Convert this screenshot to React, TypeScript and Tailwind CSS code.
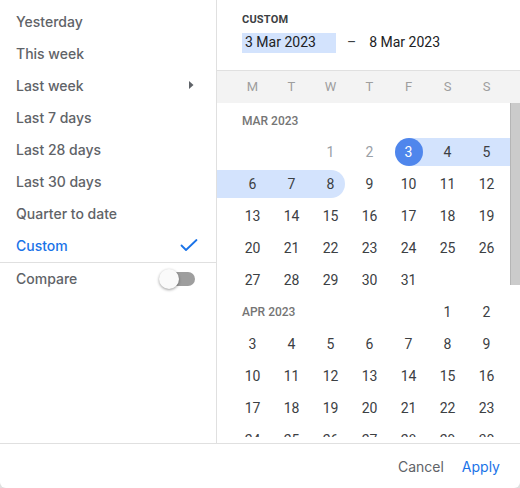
import React from 'react'

const presets = [
  'Yesterday',
  'This week',
  'Last week',
  'Last 7 days',
  'Last 28 days',
  'Last 30 days',
  'Quarter to date',
  'Custom',
]

const weekdays = ['M', 'T', 'W', 'T', 'F', 'S', 'S']

type Month = { label: string; key: number; offset: number; days: number; inlineLabel: boolean }

const months: Month[] = [
  { label: 'MAR 2023', key: 3, offset: 2, days: 31, inlineLabel: false },
  { label: 'APR 2023', key: 4, offset: 5, days: 30, inlineLabel: true },
]

const range = { month: 3, start: 3, end: 8 }

function buildWeeks(m: Month) {
  const cells: (number | null)[] = []
  for (let i = 0; i < m.offset; i++) cells.push(null)
  for (let d = 1; d <= m.days; d++) cells.push(d)
  while (cells.length % 7) cells.push(null)
  const weeks: (number | null)[][] = []
  for (let i = 0; i < cells.length; i += 7) weeks.push(cells.slice(i, i + 7))
  return weeks
}

function inRange(month: number, d: number | null) {
  return d !== null && month === range.month && d >= range.start && d <= range.end
}

function DayCell({ month, day }: { month: number; day: number | null }) {
  if (day === null) return <div className="h-8 w-[39px]" />
  const on = inRange(month, day)
  const isStart = on && day === range.start
  const isEnd = on && day === range.end
  const muted = month === 3 && day < 3

  return (
    <div className="relative flex h-8 w-[39px] items-center justify-center">
      {on && !isStart && !isEnd && <div className="absolute inset-x-0 inset-y-[2px] bg-[#d3e3fd]" />}
      {isStart && <div className="absolute left-1/2 right-0 inset-y-[2px] bg-[#d3e3fd]" />}
      {isEnd && <div className="absolute left-0 right-[5px] inset-y-[2px] rounded-r-full bg-[#d3e3fd]" />}
      {isStart ? (
        <span className="relative flex h-7 w-7 items-center justify-center rounded-full bg-[#4f86ec] text-white">{day}</span>
      ) : (
        <span className={`relative ${muted ? 'text-[#9aa0a6]' : 'text-[#3c4043]'}`}>{day}</span>
      )}
    </div>
  )
}

function MonthBlock({ m }: { m: Month }) {
  const weeks = buildWeeks(m)
  return (
    <div>
      {!m.inlineLabel && (
        <div className="flex h-8 items-center pl-[25px] pt-[2px] text-[12px] font-medium text-[#757575]">{m.label}</div>
      )}
      {weeks.map((w, i) => {
        const leftBand = inRange(m.key, w[0]) && w[0] !== range.start
        const last = w[6]
        const rightBand = inRange(m.key, last) && last !== range.end
        return (
          <div key={i} className="relative flex h-8 items-center">
            <div className={`h-7 w-4 ${leftBand ? 'bg-[#d3e3fd]' : ''}`} />
            {w.map((d, j) => (
              <DayCell key={j} month={m.key} day={d} />
            ))}
            <div className={`h-7 flex-1 ${rightBand ? 'bg-[#d3e3fd]' : ''}`} />
            {m.inlineLabel && i === 0 && (
              <div className="absolute left-[25px] top-0 flex h-8 items-center text-[12px] font-medium text-[#757575]">{m.label}</div>
            )}
          </div>
        )
      })}
    </div>
  )
}

export default function App() {
  return (
    <div className="h-[488px] w-[520px] bg-[#e0e0e0]" style={{ fontFamily: 'Roboto, "Noto Sans", sans-serif' }}>
      <div className="flex h-full w-full flex-col overflow-hidden rounded-b-[6px] bg-white text-[14px]">
        <div className="flex min-h-0 flex-1">
          {/* Presets */}
          <div className="w-[217px] shrink-0 border-r border-[#e0e0e0] pt-[5px] font-['Inter',sans-serif]">
            {presets.map((p) => {
              const active = p === 'Custom'
              return (
                <div
                  key={p}
                  className={`flex h-8 items-center justify-between pl-4 pr-[18px] font-medium ${active ? 'text-[#1a73e8]' : 'text-[#5f6368]'}`}
                >
                  <span>{p}</span>
                  {p === 'Last week' && (
                    <svg width="8" height="10" viewBox="0 0 8 10" className="mr-[3px]">
                      <path d="M2 1l4.5 4L2 9z" fill="#5f6368" />
                    </svg>
                  )}
                  {active && (
                    <svg width="18" height="14" viewBox="0 0 18 14" fill="none">
                      <path d="M1.5 7.5l4.5 4.5L16.5 2" stroke="#1a73e8" strokeWidth="1.8" strokeLinecap="round" strokeLinejoin="round" />
                    </svg>
                  )}
                </div>
              )
            })}
            <div className="mt-px flex h-8 items-center justify-between border-t border-[#e0e0e0] pl-4 pr-[21px] font-medium text-[#5f6368]">
              <span>Compare</span>
              <div className="relative flex h-5 w-9 items-center">
                <div className="ml-1 h-[14px] w-8 rounded-full bg-[#9e9e9e]" />
                <div className="absolute left-0 top-0 h-5 w-5 rounded-full bg-[#fafafa] shadow-[0_1px_3px_rgba(0,0,0,0.4)]" />
              </div>
            </div>
          </div>

          {/* Calendar */}
          <div className="flex min-w-0 flex-1 flex-col">
            <div className="h-[71px] shrink-0 border-b border-[#e0e0e0] pl-[25px] pt-[13px]">
              <div className="text-[11px] font-bold leading-[13px] tracking-[0.2px] text-[#3c4043]">CUSTOM</div>
              <div className="mt-[6px] flex items-center text-[14px] text-[#202124]">
                <span className="flex h-5 w-[94px] items-center bg-[#d3e3fd] pl-[3px]">3 Mar 2023</span>
                <span className="ml-[11px] text-[#3c4043]">–</span>
                <span className="ml-[13px]">8 Mar 2023</span>
              </div>
            </div>
            <div className="flex h-8 shrink-0 items-center bg-[#f3f3f3] pl-4 text-[13px] text-[#9e9e9e]">
              {weekdays.map((d, i) => (
                <div key={i} className="w-[39px] text-center">{d}</div>
              ))}
            </div>
            <div className="mb-[6px] flex min-h-0 flex-1 overflow-hidden">
              <div className="min-w-0 flex-1 pt-px">
                {months.map((m) => (
                  <MonthBlock key={m.key} m={m} />
                ))}
              </div>
              <div className="w-[10px] shrink-0">
                <div className="h-[182px] border-l border-[#b5b5b5] bg-[#cbcbcb]" />
              </div>
            </div>
          </div>
        </div>

        {/* Footer */}
        <div className="flex h-[45px] shrink-0 items-center justify-end gap-[18px] border-t border-[#e0e0e0] pr-5 font-['Inter',sans-serif] text-[14px]">
          <button className="text-[#5f6368]">Cancel</button>
          <button className="text-[#1a73e8]">Apply</button>
        </div>
      </div>
    </div>
  )
}
